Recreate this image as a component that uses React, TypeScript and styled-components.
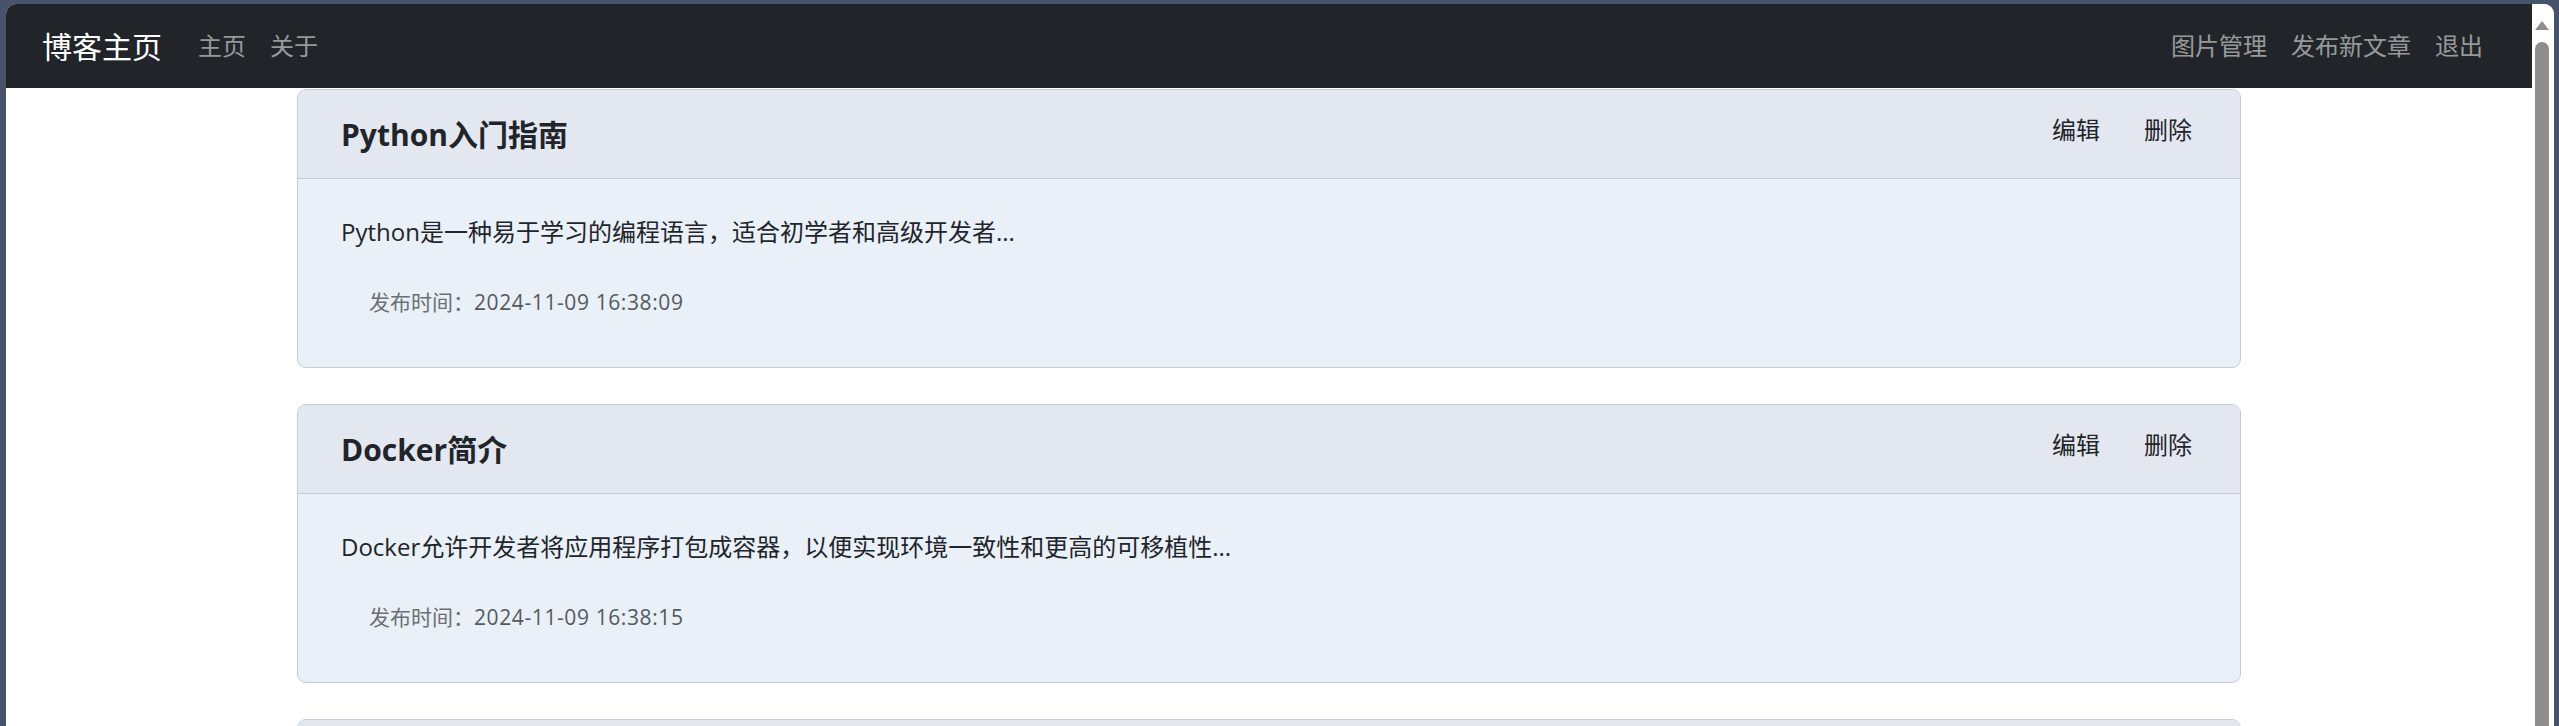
import React, {FC} from 'react';
import {createGlobalStyle, styled} from "styled-components";

const GlobalStyle = createGlobalStyle`
  html, body {
    margin: 0;
    padding: 0;
    height: 100%;
    overflow: hidden;
    background: #45546a;
  }

  #root {
    height: 100%;
  }

  * {
    box-sizing: border-box;
  }
`

const Frame = styled.div`
  height: 100vh;
  padding: 4px 5px 0 6px;
  font-family: "Open Sans", "Noto Sans CJK SC", sans-serif;
`

const Window = styled.div`
  height: 100%;
  display: flex;
  background: #ffffff;
  border-radius: 10px 10px 0 0;
  overflow: hidden;
`

const Page = styled.div`
  flex: 1;
  min-width: 0;
  overflow: hidden;
`

const Scrollbar = styled.div`
  width: 22px;
  flex-shrink: 0;
  background: #ffffff;

  display: flex;
  flex-direction: column;
  align-items: center;
  padding-top: 17px;
`

const ScrollArrow = styled.div`
  width: 0;
  height: 0;
  border-left: 7px solid transparent;
  border-right: 7px solid transparent;
  border-bottom: 9px solid #8e8e8e;
  margin-right: 3px;
`

const ScrollThumb = styled.div`
  width: 14px;
  flex: 1;
  margin-top: 12px;
  margin-right: 3px;
  background: #8e8e8e;
  border-radius: 7px 7px 0 0;
`

const Navbar = styled.nav`
  height: 84px;
  padding: 0 37px 0 36px;
  background: #212529;

  display: flex;
  align-items: center;
  justify-content: space-between;
`

const NavGroup = styled.div`
  display: flex;
  align-items: center;
`

const Brand = styled.a`
  font-size: 30px;
  line-height: 45px;
  color: #ffffff;
  margin-right: 24px;
  text-decoration: none;
`

const NavLink = styled.a`
  padding: 0 12px;
  font-size: 24px;
  line-height: 36px;
  color: rgba(255, 255, 255, .55);
  text-decoration: none;
  cursor: pointer;
`

const Container = styled.main`
  width: 1944px;
  margin: 1px auto 0;
`

const Card = styled.article`
  margin-bottom: 36px;
  border: 1px solid #c6cbd3;
  border-radius: 9px;
  overflow: hidden;
  background: #e9f0f8;
`

const CardHeader = styled.header`
  height: 89px;
  padding: 0 30px 0 43px;
  background: #e3e8f0;
  border-bottom: 1px solid #c6cbd3;

  display: flex;
  align-items: center;
  justify-content: space-between;
`

const CardTitle = styled.h4`
  margin: 0;
  font-size: 30px;
  line-height: 45px;
  font-weight: 700;
  color: #212529;
`

const ActionGroup = styled.div`
  display: flex;
  gap: 8px;
  margin-bottom: 9px;
`

const ActionButton = styled.button`
  padding: 0 18px;
  border: none;
  background: transparent;
  font-family: inherit;
  font-size: 24px;
  line-height: 36px;
  color: #212529;
  cursor: pointer;
`

const CardBody = styled.div`
  padding: 35px 43px 49px;
`

const CardText = styled.p`
  margin: 0 0 36px;
  font-size: 24px;
  line-height: 36px;
  color: #212529;
`

const CardDate = styled.p`
  margin: 0;
  padding-left: 28px;
  font-size: 21px;
  line-height: 32px;
  color: #6c6f73;
`

const DateValue = styled.span`
  color: #55595e;
  letter-spacing: 0.6px;
`

interface Post {
  id: number;
  title: string;
  summary: string;
  createdAt: string;
}

const posts: Post[] = [
  {
    id: 1,
    title: "Python入门指南",
    summary: "Python是一种易于学习的编程语言，适合初学者和高级开发者...",
    createdAt: "2024-11-09 16:38:09",
  },
  {
    id: 2,
    title: "Docker简介",
    summary: "Docker允许开发者将应用程序打包成容器，以便实现环境一致性和更高的可移植性...",
    createdAt: "2024-11-09 16:38:15",
  },
  {
    id: 3,
    title: "Git常用命令",
    summary: "Git是一个分布式版本控制系统，掌握常用命令可以提高开发效率...",
    createdAt: "2024-11-09 16:38:21",
  },
];

const PostCard: FC<{post: Post}> = ({post}) => (
  <Card>
    <CardHeader>
      <CardTitle>{post.title}</CardTitle>
      <ActionGroup>
        <ActionButton>编辑</ActionButton>
        <ActionButton>删除</ActionButton>
      </ActionGroup>
    </CardHeader>
    <CardBody>
      <CardText>{post.summary}</CardText>
      <CardDate>发布时间：<DateValue>{post.createdAt}</DateValue></CardDate>
    </CardBody>
  </Card>
);

const App: FC = () => {
  return (
    <>
      <GlobalStyle/>
      <Frame>
        <Window>
          <Page>
            <Navbar>
              <NavGroup>
                <Brand>博客主页</Brand>
                <NavLink>主页</NavLink>
                <NavLink>关于</NavLink>
              </NavGroup>
              <NavGroup>
                <NavLink>图片管理</NavLink>
                <NavLink>发布新文章</NavLink>
                <NavLink>退出</NavLink>
              </NavGroup>
            </Navbar>
            <Container>
              {posts.map(post => <PostCard key={post.id} post={post}/>)}
            </Container>
          </Page>
          <Scrollbar>
            <ScrollArrow/>
            <ScrollThumb/>
          </Scrollbar>
        </Window>
      </Frame>
    </>
  );
};

export default App;
